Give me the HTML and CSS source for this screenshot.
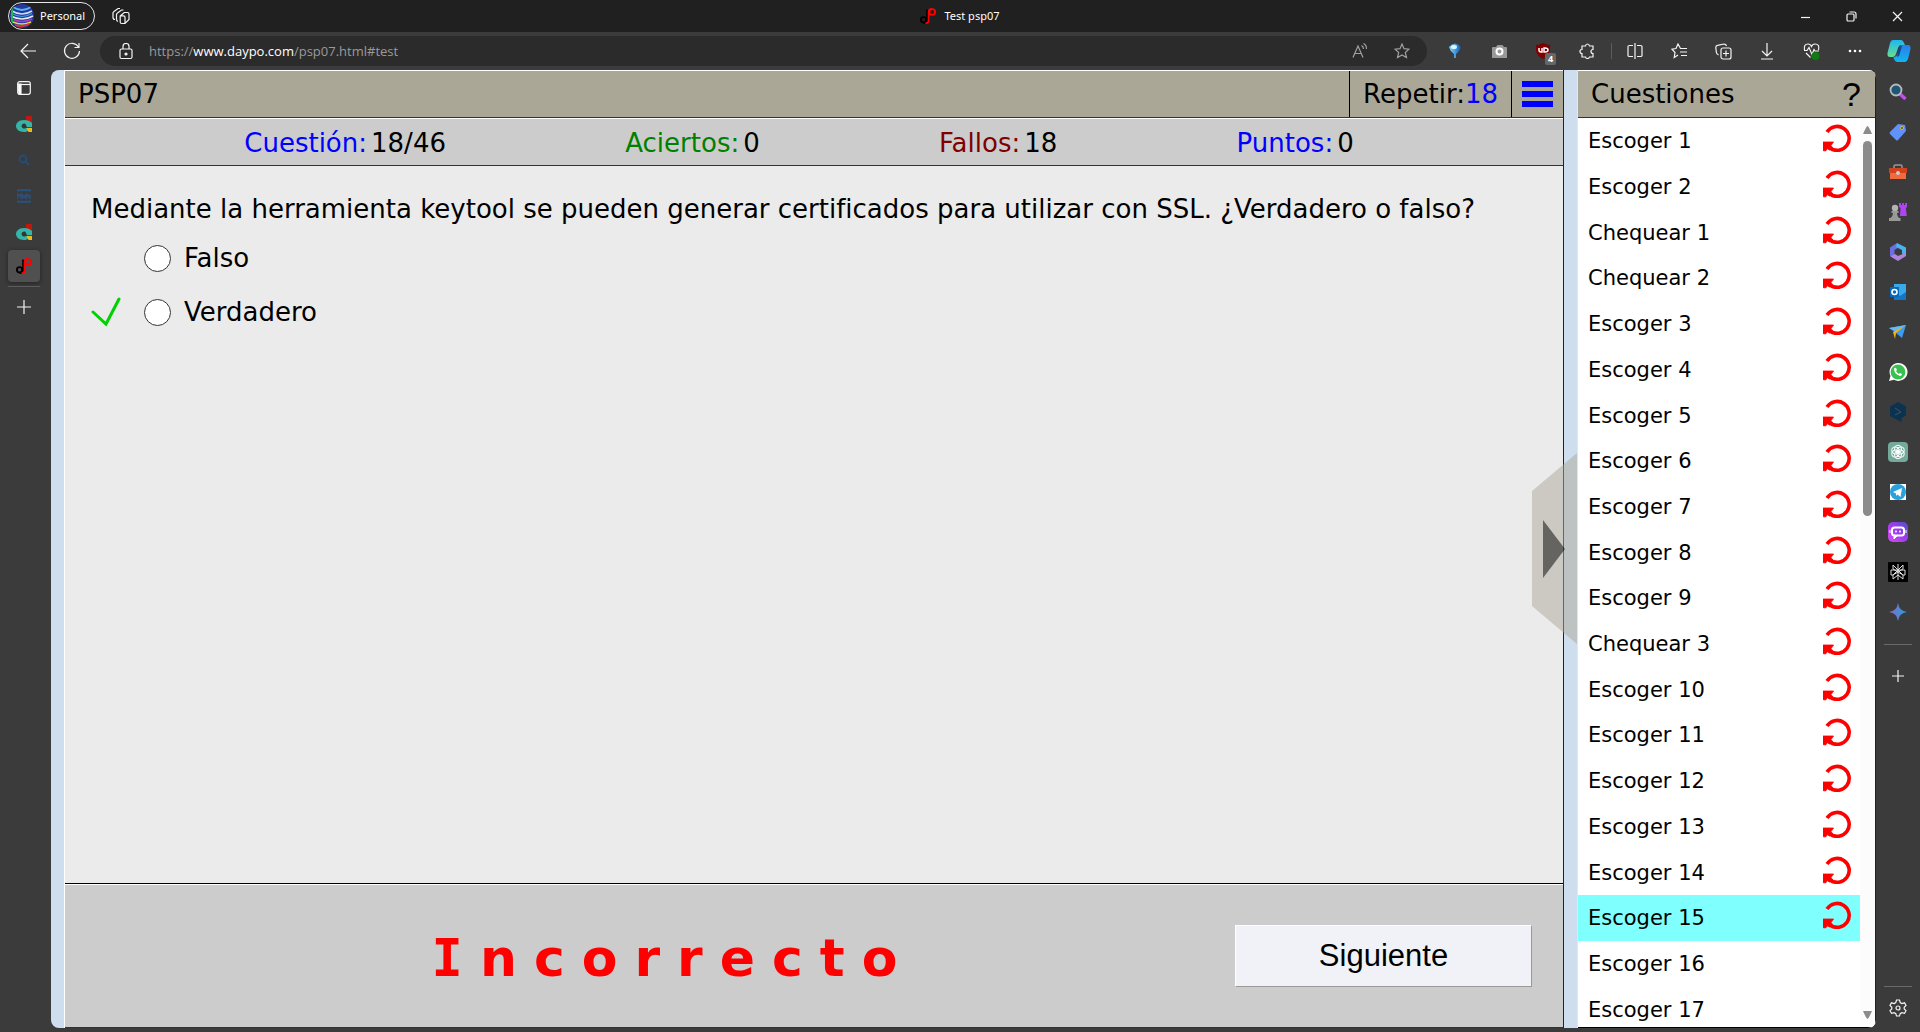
FILE: index.html
```html
<!DOCTYPE html>
<html lang="es">
<head>
<meta charset="utf-8">
<title>Test psp07</title>
<link rel="stylesheet" href="styles.css">
</head>
<body>
<svg class="defs" aria-hidden="true">
  <symbol id="retry" viewBox="0 0 28 28"><path d="M4 8A12 12 0 1 1 7 24" fill="none" stroke="#f00" stroke-width="3.6"/><path d="M0 18H10.500L9.500 19.600 8 21.500 9.500 23.500 6.500 26 4.500 24.800 2.500 27 0 26.600Z" fill="#f00" stroke="#f00" stroke-width=".8"/></symbol>
  <symbol id="dp" viewBox="0 0 16 16"><path d="M7 1.500v11q0 3-3 3" fill="none" stroke="#000" stroke-width="1.600"/><circle cx="3.600" cy="11.800" r="2.700" fill="none" stroke="#000" stroke-width="1.900"/><circle cx="12.200" cy="4" r="2.900" fill="none" stroke="#f00" stroke-width="1.900"/><path d="M8.600 13V4Q8.600.9 12 .9M5.500 15.200q3.100 0 3.100-2.700" fill="none" stroke="#f00" stroke-width="1.700"/></symbol>
  <symbol id="campus" viewBox="0 0 16 16"><path d="M10 0h6v7h-6z" fill="#c3160f"/><path d="M8 4C3 4 0 7 0 10s3 6 8 6c2 0 3-.5 4-1v-3h-2c-2 1.500-4.500 0-4.500-2S8 7 9.500 8l1.500 3h5V7q-3-3-8-3z" fill="#35b5a8"/><path d="M10.500 12H16v4h-3.500z" fill="#ecb81b"/><path d="M11 11h5v1h-5z" fill="#c3160f"/><circle cx="8" cy="10" r="1.800" fill="#333"/></symbol>
</svg>

<header class="titlebar">
  <div class="account">
    <button class="profile"><svg class="avatar" viewBox="0 0 24 24"><defs><clipPath id="av"><circle cx="12" cy="12" r="12"/></clipPath></defs><g clip-path="url(#av)" fill="none"><path d="M0 0h24v24H0z" fill="#2438a0"/><path d="M3 3q9 6 18 0" stroke="#58b4ea" stroke-width="2"/><path d="M2 7q10 6 20 0" stroke="#d5dcf5" stroke-width="1.500"/><path d="M2 9.500q10 6 20 0" stroke="#31a7d8" stroke-width="1.200"/><path d="M1 12q11 6 22 0" stroke="#e6e9ef" stroke-width="1.500"/><path d="M2 15q10 5 20 0" stroke="#b23ac0" stroke-width="1.500"/><path d="M3 18q9 4 18 0" stroke="#e0d840" stroke-width="1.500"/><path d="M5 21q7 3 14-1" stroke="#d8333e" stroke-width="2"/><path d="M2 4v16" stroke="#22b655" stroke-width="2"/></g></svg><span>Personal</span></button>
    <button aria-label="Áreas de trabajo"><svg width="18" height="18" viewBox="0 0 18 18" class="line"><path d="M3 12.500Q1 12.500 1 10.500V6q0-1 1-1.600L6 1.500h2M6 14.500Q4.500 14 4.500 12V7.500q0-1 1-1.600L9.500 3h2M8.200 9l4-3.500h3.300q1.500 0 1.500 1.500v5.500L13 16.500H9.700q-1.500 0-1.500-1.500zM8.500 8.800h3q1.500 0 1.500 1.500v6"/></svg></button>
  </div>
  <h1 class="tabtitle"><svg width="16" height="16"><use href="#dp"/></svg>Test psp07</h1>
  <div class="winbtns">
    <button aria-label="Minimizar"><svg width="11" height="11" class="line"><path d="M1 6.500h9"/></svg></button>
    <button aria-label="Restaurar"><svg width="11" height="11" class="line"><rect x="1" y="3" width="7" height="7" rx="1"/><path d="M3.500 1h4.500q2 0 2 2v4.500"/></svg></button>
    <button aria-label="Cerrar"><svg width="11" height="11" class="line"><path d="M1 1l9 9M10 1l-9 9"/></svg></button>
  </div>
</header>

<nav class="toolbar">
  <button aria-label="Atrás" class="nav"><svg width="18" height="16" class="line"><path d="M17 8H2M9 1L2 8l7 7"/></svg></button>
  <button aria-label="Actualizar" class="nav"><svg width="18" height="18" class="line"><path d="M15.500 5A7.500 7.500 0 1 0 16.500 9M16 1v4.500h-4.500"/></svg></button>
  <div class="address">
    <svg width="14" height="17" class="line"><rect x="1" y="6" width="12" height="9.500" rx="1.500"/><path d="M4 6V3.500a3 3 0 0 1 6 0V6"/><circle cx="7" cy="11" r="1" fill="#fff"/></svg>
    <p class="url">https://<b>www.daypo.com</b>/psp07.html#test</p>
    <button aria-label="Leer en voz alta"><svg width="16" height="16" class="dim"><path d="M1 14.500L6 3l5 11.500M3 10.500h6M9.500 2.500q2 1 2 3.500M11.500.5q3 1.500 3 5.500"/></svg></button>
    <button aria-label="Favorito"><svg width="16" height="16" class="dim"><path d="M8 1l2 4.700 5 .5-3.700 3.300 1.200 5L8 12l-4.500 2.500 1.200-5L1 6.200l5-.5z"/></svg></button>
  </div>
  <button aria-label="Extensión"><svg width="14" height="16"><defs><linearGradient id="pin"><stop stop-color="#8bdcff"/><stop offset="1" stop-color="#0759c0"/></linearGradient></defs><path d="M1 4Q7-3 13 4 12 8 8 11v4H6v-4Q2 8 1 4z" fill="url(#pin)"/><ellipse cx="6" cy="4" rx="3" ry="2" fill="#dff6ff"/></svg></button>
  <button aria-label="Captura"><svg width="15" height="15"><path d="M1 3h3l1.500-2h5L12 3h2q1 0 1 1v10H0V4q0-1 1-1z" fill="#999"/><circle cx="7.500" cy="7.500" r="3" fill="none" stroke="#fff" stroke-width="2"/></svg></button>
  <button aria-label="uBlock" class="ublock"><svg width="16" height="16"><path d="M8 0q4 2 7 2v6q-1 5-7 8-6-3-7-8V2q3 0 7-2z" fill="#800000"/><path d="M4 5v2q0 2 2 2h1V5M9 5h1q3 0 3 2t-3 2H9z" fill="none" stroke="#fff" stroke-width="1.500"/></svg><span class="count">4</span></button>
  <button aria-label="Extensiones"><svg width="16" height="16" class="line"><path d="M3 3h3.500q.3-2 2-2t2 2H14v3.500q-2 0-2 2t2 2V14h-3.500q-.3 1.500-2 1.500T6.500 14H3v-3.500q-2 0-2-2t2-2z"/></svg></button>
  <span class="sep"></span>
  <button aria-label="Pantalla dividida"><svg width="16" height="16" class="line"><path d="M8 0v16M6 2.500H2.500q-1.500 0-1.500 1v9q0 1 1.500 1H6M10 2.500h3.500q1.500 0 1.500 1v9q0 1-1.500 1H10"/></svg></button>
  <button aria-label="Favoritos"><svg width="16" height="16" class="line"><path d="M11 5.500H9.500L7 1 5 5.500l-4 .7L4 9.500l-.8 5L7 12M10 5.500h6M9 9h7M10 12.500h6"/></svg></button>
  <button aria-label="Colecciones"><svg width="17" height="17" class="line"><rect x="6" y="5" width="10" height="11" rx="2"/><path d="M11 7.500v6M8 10.500h6M3.500 12Q1.500 11 1.300 9L.8 4.500Q.8 2.500 2.500 2.300L9 1q2 0 2.500 2"/></svg></button>
  <button aria-label="Descargas"><svg width="14" height="17" class="line"><path d="M7 0v13M2 8l5 5 5-5M1 16h12"/></svg></button>
  <button aria-label="Rendimiento"><svg width="17" height="17" class="line"><path d="M1.500 7Q.5 1 5 1q2.500 0 3.500 2.500Q9.500 1 12 1q5 0 3.500 6M1 7.500h3l2-3 3 7 2-5 1 1.500h4M3 10l4.500 4.500"/><circle cx="12.500" cy="13" r="4" fill="#0f7b10" stroke="none"/></svg></button>
  <button aria-label="Más"><svg width="14" height="4" fill="#fff"><circle cx="2" cy="2" r="1.300"/><circle cx="7" cy="2" r="1.300"/><circle cx="12" cy="2" r="1.300"/></svg></button>
  <button aria-label="Copilot"><svg width="24" height="24"><defs><linearGradient id="co" x2="0" y2="1"><stop stop-color="#1cb8ef"/><stop offset="1" stop-color="#6bdc91"/></linearGradient><linearGradient id="cp" x2="0" y2="1"><stop stop-color="#2b7de9"/><stop offset="1" stop-color="#12b5f0"/></linearGradient></defs><path d="M6 1h8q2 0 3 3l1 2h-4q-2 0-3 3l-2 6q-1 3-3 3H3q-3 0-2.500-4L3 4q1-3 3-3z" fill="url(#co)"/><path d="M18 23h-8q-2 0-3-3l-.5-2q3 0 4-3l2-6q1-3 3-3H21q3 0 2.500 4L21 20q-1 3-3 3z" fill="url(#cp)"/><path d="M12 8l3-1-3 10-2 1z" fill="#14468d"/></svg></button>
</nav>

<div class="workspace">
  <nav class="tabs">
    <button aria-label="Pestañas"><svg width="14" height="14" class="line"><rect x=".7" y=".7" width="12.600" height="12.600" rx="2"/><path d="M1 3.500h12"/><path d="M1 3h3v10H2z" fill="#fff"/></svg></button>
    <button aria-label="Campus"><svg width="16" height="16"><use href="#campus"/></svg></button>
    <button aria-label="Buscar"><svg width="12" height="12" fill="none" stroke="#254d78" stroke-width="1.800"><circle cx="5" cy="5" r="3.500"/><path d="M7.500 7.500l3.500 3.500"/></svg></button>
    <button aria-label="MVN"><svg width="14" height="14" fill="none" stroke="#2b5280"><path d="M0 1.200h14M0 12.800h14" stroke-width="2"/><path d="M.8 10V5l1.500 2L4 5v5M5.500 5v4l1.500-2 1.500 2V5M10 10V5l3 4V5" stroke-width="1.200"/></svg></button>
    <button aria-label="Campus 2"><svg width="16" height="16"><use href="#campus"/></svg></button>
    <button aria-label="Test psp07" class="current"><svg width="16" height="16"><use href="#dp"/></svg></button>
    <button aria-label="Nueva pestaña" class="newtab"><svg width="14" height="14" class="line"><path d="M7 0v14M0 7h14"/></svg></button>
  </nav>

  <div class="page">
    <main class="quiz">
      <header class="bar head">
        <h2>PSP07</h2>
        <p class="repeat">Repetir:<span class="blue">18</span></p>
        <button class="menu" aria-label="Menú"><i></i><i></i><i></i></button>
      </header>
      <div class="bar stats">
        <p><span class="blue">Cuestión:</span>18/46</p>
        <p><span class="green">Aciertos:</span>0</p>
        <p><span class="maroon">Fallos:</span>18</p>
        <p><span class="blue">Puntos:</span>0</p>
      </div>
      <section class="question">
        <p>Mediante la herramienta keytool se pueden generar certificados para utilizar con SSL. ¿Verdadero o falso?</p>
        <div class="option"><span class="mark"></span><input type="radio" name="r" id="r1"><label for="r1">Falso</label></div>
        <div class="option"><span class="mark"><svg width="30" height="30"><path d="M2 15l13 12L28 2" fill="none" stroke="#00d200" stroke-width="3" stroke-linecap="round"/></svg></span><input type="radio" name="r" id="r2"><label for="r2">Verdadero</label></div>
      </section>
      <footer class="result">
        <p class="verdict">Incorrecto</p>
        <button class="next">Siguiente</button>
      </footer>
    </main>
    <div class="gutter"><svg class="handle" width="45" height="191"><path d="M45 0v191L0 153V38z" fill="#aba797" fill-opacity=".5"/><path d="M11 67l22 29-22 29z" fill="#000" fill-opacity=".5"/></svg></div>
    <aside class="panel">
      <header class="bar"><h2>Cuestiones</h2><button class="help">?</button></header>
      <div class="scroller">
        <ul>
          <li><a href="#1">Escoger 1</a><svg><use href="#retry"/></svg></li>
          <li><a href="#2">Escoger 2</a><svg><use href="#retry"/></svg></li>
          <li><a href="#3">Chequear 1</a><svg><use href="#retry"/></svg></li>
          <li><a href="#4">Chequear 2</a><svg><use href="#retry"/></svg></li>
          <li><a href="#5">Escoger 3</a><svg><use href="#retry"/></svg></li>
          <li><a href="#6">Escoger 4</a><svg><use href="#retry"/></svg></li>
          <li><a href="#7">Escoger 5</a><svg><use href="#retry"/></svg></li>
          <li><a href="#8">Escoger 6</a><svg><use href="#retry"/></svg></li>
          <li><a href="#9">Escoger 7</a><svg><use href="#retry"/></svg></li>
          <li><a href="#10">Escoger 8</a><svg><use href="#retry"/></svg></li>
          <li><a href="#11">Escoger 9</a><svg><use href="#retry"/></svg></li>
          <li><a href="#12">Chequear 3</a><svg><use href="#retry"/></svg></li>
          <li><a href="#13">Escoger 10</a><svg><use href="#retry"/></svg></li>
          <li><a href="#14">Escoger 11</a><svg><use href="#retry"/></svg></li>
          <li><a href="#15">Escoger 12</a><svg><use href="#retry"/></svg></li>
          <li><a href="#16">Escoger 13</a><svg><use href="#retry"/></svg></li>
          <li><a href="#17">Escoger 14</a><svg><use href="#retry"/></svg></li>
          <li class="active"><a href="#18">Escoger 15</a><svg><use href="#retry"/></svg></li>
          <li><a href="#19">Escoger 16</a></li>
          <li><a href="#20">Escoger 17</a></li>
        </ul>
        <div class="track"><svg width="9" height="8"><path d="M4.500 0Q5.500 0 9 8H0Q3.500 0 4.500 0z" fill="#8b8b8b"/></svg><span class="thumb"></span><svg width="9" height="8"><path d="M4.500 8Q5.500 8 9 0H0Q3.500 8 4.500 8z" fill="#8b8b8b"/></svg></div>
      </div>
    </aside>
  </div>

  <nav class="apps">
    <button aria-label="Buscar"><svg width="18" height="18"><path d="M10.500 10.500l6 5.500" stroke="#c34df0" stroke-width="3.500"/><circle cx="7" cy="7" r="5.500" fill="#1f5674" stroke="#b5bcc0" stroke-width="1.800"/></svg></button>
    <button aria-label="Compras"><svg width="18" height="18"><path d="M9 1l7 1 1 6-8 9q-1 1-2 0l-6-6q-1-1 0-2z" fill="#6092fa"/><circle cx="13" cy="5" r="1.500" fill="#35425d" stroke="#e7c227"/></svg></button>
    <button aria-label="Herramientas"><svg width="18" height="16"><path d="M5 5V2.500Q5 1 6.500 1h5Q13 1 13 2.500V5" fill="none" stroke="#999" stroke-width="1.500"/><path d="M0 4h18v5H0z" fill="#d3421c"/><path d="M1 9h16v6H1z" fill="#f06a3b"/><circle cx="9" cy="9" r="2" fill="#ccc"/></svg></button>
    <button aria-label="Juegos"><svg width="18" height="18"><path d="M10 0h2v2h1.200V0h1.800v2h1.200V0H18v4l-1.200 1 1 8H11l.5-8L10 4z" fill="#b044f5"/><circle cx="6" cy="5" r="3.200" fill="#b4b4b4"/><path d="M2.500 8h7v2H8q0 3 2 5h1.500v3H0v-3h1.500q2.500-2 2.500-5H2.500z" fill="#999"/></svg></button>
    <button aria-label="Microsoft 365"><svg width="18" height="18"><path d="M8 0L1 4.500V13l5 3v-4l-.5-.5V7L11 3.500z" fill="#6d6fe0"/><path d="M8 0l9 4.500V13l-4-2.500V7L7 4z" fill="#48b3ee"/><path d="M1.500 13.500L6 11l3 2 7-3 1 3-8 5z" fill="#b083dc"/></svg></button>
    <button aria-label="Outlook"><svg width="18" height="18"><path d="M5 1h12v15H5z" fill="#38a9ea"/><path d="M5 9l6 4 6-4v8H5z" fill="#1276c8"/><path d="M1 4h9v10H1z" fill="#0868ba"/><circle cx="5.500" cy="9" r="2.500" fill="none" stroke="#fff" stroke-width="1.600"/></svg></button>
    <button aria-label="Drop"><svg width="18" height="16"><path d="M0 4l17-3-4 13-6-5z" fill="#3d9cf0"/><path d="M0 4l17-3L6 7z" fill="#67b9f7"/><path d="M17 1L7 9l-1 6-2-7z" fill="#f2b517"/></svg></button>
    <button aria-label="WhatsApp"><svg width="20" height="20"><path d="M1 19l1.500-5A9 9 0 1 1 6 17.700z" fill="#fff"/><circle cx="10" cy="10" r="7.400" fill="#3ac04f"/><path d="M6.500 6Q8 5 8.500 7l.5 1-1 1q1 2 3 3l1-1 2 1q0 2-2 2-6-2-6-7z" fill="#fff"/></svg></button>
    <button aria-label="DeepL"><svg width="18" height="20"><path d="M9 0l8 4.500v9L12.500 16v4L1 14V4.500z" fill="#0b3350"/><path d="M6 6l6 4-6 3" fill="none" stroke="#3c5568"/></svg></button>
    <button aria-label="ChatGPT"><svg width="20" height="20"><rect width="20" height="20" rx="4" fill="#74aa9c"/><g fill="none" stroke="#fff" stroke-width="1"><ellipse cx="10" cy="7" rx="3.500" ry="3.800"/><ellipse cx="10" cy="13" rx="3.500" ry="3.800"/><ellipse cx="7.500" cy="8.500" rx="3.800" ry="3.500" transform="rotate(30 7.500 8.500)"/><ellipse cx="12.500" cy="11.500" rx="3.800" ry="3.500" transform="rotate(30 12.500 11.500)"/><ellipse cx="12.500" cy="8.500" rx="3.800" ry="3.500" transform="rotate(-30 12.500 8.500)"/><ellipse cx="7.500" cy="11.500" rx="3.800" ry="3.500" transform="rotate(-30 7.500 11.500)"/></g></svg></button>
    <button aria-label="Telegram"><svg width="16" height="16"><path d="M0 0h16v16H0z" fill="#fff"/><circle cx="8" cy="8" r="8" fill="#2ba0dc"/><path d="M3 8l9-4-1.500 9-3-2.500L6 12V9.500z" fill="#fff"/></svg></button>
    <button aria-label="Poe"><svg width="20" height="20"><defs><linearGradient id="poe" x1="1" y1="0" x2="0" y2="1"><stop stop-color="#4f50c8"/><stop offset=".5" stop-color="#a43af0"/><stop offset="1" stop-color="#d24ff2"/></linearGradient></defs><rect width="20" height="20" rx="5" fill="url(#poe)"/><rect x="4" y="5.500" width="12" height="8" rx="2.500" fill="none" stroke="#fff" stroke-width="2"/><path d="M2 8v3M18 8v3M6 13v4l3-3z" stroke="#fff" fill="#fff"/><circle cx="8" cy="9.500" r="1" fill="#fff"/><circle cx="12" cy="9.500" r="1" fill="#fff"/></svg></button>
    <button aria-label="Perplexity"><svg width="20" height="20"><rect width="20" height="20" rx="1" fill="#000"/><path d="M10 2v16M5 3v4l5 3 5-3V3l-5 5zM3 8h14v5h-2l-5-5-5 5H3zM5 17v-4l5-3 5 3v4l-5-4z" fill="none" stroke="#ddd"/></svg></button>
    <button aria-label="Gemini"><svg width="18" height="18"><defs><linearGradient id="gem"><stop stop-color="#9168c0"/><stop offset="1" stop-color="#1ba1e3"/></linearGradient></defs><path d="M9 0q1 8 9 9-8 1-9 9-1-8-9-9 8-1 9-9z" fill="url(#gem)"/></svg></button>
    <hr>
    <button aria-label="Añadir"><svg width="12" height="12" class="line"><path d="M6 0v12M0 6h12"/></svg></button>
    <span class="fill"></span>
    <hr>
    <button aria-label="Configuración"><svg width="18" height="18" class="line"><path d="M7.500 1h3l.7 2.500 1.600 1 2.700-.7 1.500 2.700L15.200 8.300v1.600l1.800 1.800-1.500 2.700-2.700-.7-1.600 1L10.500 17h-3l-.7-2.300-1.600-1-2.700.7L1 11.700l1.800-1.800V8.300L1 6.500l1.500-2.700 2.700.7 1.600-1z"/><circle cx="9" cy="9" r="2"/></svg></button>
  </nav>
</div>
</body>
</html>
```
FILE: styles.css
```css
* { box-sizing: border-box; margin: 0; }
body {
  height: 100vh; display: flex; flex-direction: column; overflow: hidden;
  background: #3b3b3b; color: #000;
  font-family: "DejaVu Sans", Verdana, sans-serif; font-size: 26px; line-height: 32px;
}
button { border: 0; padding: 0; background: none; color: inherit; font: inherit; display: flex; align-items: center; justify-content: center; }
svg { display: block; flex: none; }
h1, h2 { font: inherit; }
.defs { position: absolute; width: 0; height: 0; }
.line { fill: none; stroke: #f4f4f4; stroke-width: 1.2; }
.dim { fill: none; stroke: #a0a0a0; stroke-width: 1.2; }

.titlebar { height: 32px; flex: none; display: grid; grid-template-columns: 1fr auto 1fr; align-items: center; background: #202020; color: #fff; font: 12px/16px "Noto Sans", sans-serif; }
.account { display: flex; align-items: center; gap: 17px; padding-left: 8px; }
.profile { width: 87px; height: 28px; padding: 0 2px 0 1px; gap: 6px; border: 1px solid #e6e6e6; border-radius: 14px; justify-content: flex-start; font-size: 11px; }
.avatar { width: 24px; height: 24px; }
.tabtitle { display: flex; align-items: center; gap: 8px; font-size: 11px; }
.winbtns { display: flex; justify-self: end; height: 32px; }
.winbtns button { width: 46px; }

.toolbar { height: 38px; flex: none; display: flex; align-items: center; padding-left: 6px; }
.toolbar button { width: 44px; height: 30px; }
.toolbar .nav:first-child + .nav { margin-right: 6px; }
.address { flex: 1; height: 30px; display: flex; align-items: center; margin-right: 6px; padding-left: 19px; border-radius: 15px; background: #2b2b2b; }
.address button { width: 40px; }
.address button:last-child { margin-right: 4px; }
.url { flex: 1; margin-left: 16px; color: #9a9a9a; font: 13px/20px "Open Sans", sans-serif; }
.url b { font-weight: 400; color: #fff; }
.ublock { position: relative; }
.count { position: absolute; left: 24px; top: 17px; width: 11px; height: 12px; border-radius: 2px; background: #666; color: #fff; font: bold 9px/12px "Open Sans", sans-serif; }
.sep { width: 1px; height: 16px; margin: 0 1px 0 2px; background: #5c5c5c; }
.toolbar button:last-child { width: 43px; }

.workspace { flex: 1; min-height: 0; display: flex; padding-bottom: 4px; }
.tabs { width: 51px; padding-right: 4px; display: flex; flex-direction: column; align-items: center; }
.tabs button { width: 32px; height: 36px; border-radius: 4px; }
.tabs .current { height: 32px; margin-bottom: 4px; background: #505050; box-shadow: 0 1px 4px #222; }
.tabs .newtab { height: 40px; border-top: 1px solid #5c5c5c; border-radius: 0; }

.page { flex: 1; min-width: 0; display: flex; padding-left: 13px; border-radius: 8px; overflow: hidden; background: #cfdeee; }
.quiz { flex: 1; display: flex; flex-direction: column; border-left: 1px solid #fff; border-right: 1px solid #222; background: #ebebeb; }
.bar { height: 48px; flex: none; display: flex; align-items: center; border-top: 1px solid #fff; border-bottom: 1px solid #333; background: #aba797; }
.bar h2 { flex: 1; padding-left: 13px; }
.repeat { align-self: stretch; display: flex; align-items: center; padding: 0 13px; border-left: 1px solid #000; border-right: 1px solid #000; }
.menu { width: 51px; flex-direction: column; gap: 4px; }
.menu i { width: 31px; height: 6px; background: #00f; }
.stats { justify-content: space-evenly; padding: 2px 30px 0 0; background: #ccc; }
.stats p { display: flex; gap: 4px; }
.blue { color: #00f; }
.green { color: #008000; }
.maroon { color: #800000; }

.question { flex: 1; padding: 27px 24px 0 26px; }
.option { display: flex; align-items: center; height: 54px; }
.question p { margin-bottom: 6px; }
.mark { width: 53px; }
.option input { appearance: none; width: 27px; height: 27px; margin: 0 13px 0 0; border: 1px solid #333; border-radius: 50%; background: #fff; }
.result { height: 145px; flex: none; display: flex; align-items: center; padding-right: 31px; border-top: 1px solid #000; border-bottom: 1px solid #333; box-shadow: inset 0 1px #fff; background: #ccc; }
.verdict { flex: 1; padding: 4px 0 0 46px; text-align: center; color: #f00; font-size: 52px; line-height: 64px; font-weight: 700; letter-spacing: 17px; }
.verdict::first-letter { font-family: "DejaVu Sans Mono", monospace; }
.next { width: 297px; height: 62px; border: 1px solid #fff; border-right-color: #999; border-bottom-color: #999; background: #f1f2f7; font: 31px/36px "Liberation Sans", Arial, sans-serif; }

.gutter { width: 13px; position: relative; }
.handle { position: absolute; right: 0; top: 40%; }

.panel { width: 299px; display: flex; flex-direction: column; border-left: 1px solid #e6e6e6; border-right: 1px solid #222; background: #fff; }
.help { width: 47px; font: 34px/40px "Liberation Sans", Arial, sans-serif; }
.scroller { flex: 1; min-height: 0; display: flex; border-bottom: 1px solid #000; }
.scroller ul { flex: 1; display: grid; grid-auto-rows: 1fr; margin-bottom: -5px; padding: 0; list-style: none; font-size: 21px; line-height: 26px; }
.scroller li { display: flex; align-items: center; justify-content: space-between; padding: 1px 9px 0 10px; }
.scroller li svg { width: 28px; height: 28px; margin-bottom: 6px; }
.scroller a { color: #000; text-decoration: none; }
.scroller .active { background: #80ffff; }
.track { width: 15px; display: flex; flex-direction: column; align-items: center; padding: 8px 0; background: #fcfcfc; }
.thumb { width: 9px; height: 42%; margin: 7px 0 auto; border-radius: 5px; background: #8b8b8b; }

.apps { width: 44px; padding-top: 2px; display: flex; flex-direction: column; align-items: center; }
.apps button { width: 40px; height: 40px; }
.apps hr { width: 28px; height: 1px; border: 0; background: #6a6a6a; margin: 12px 0 11px; }
.apps .fill { flex: 1; }
.apps .fill + hr { margin-bottom: 1px; }
```
